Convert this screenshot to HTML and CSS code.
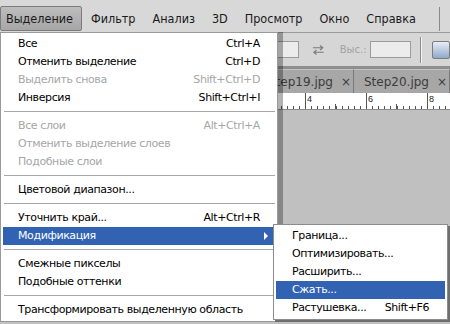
FILE: index.html
```html
<!DOCTYPE html>
<html lang="ru">
<head>
    <meta charset="UTF-8">
    <title>Выделение — Модификация</title>
    <link rel="stylesheet" href="styles.css">
</head>
<body>
    <div class="app">
        <div class="menubar">
            <span class="mb-item active">Выделение</span>
            <span class="mb-item">Фильтр</span>
            <span class="mb-item">Анализ</span>
            <span class="mb-item">3D</span>
            <span class="mb-item">Просмотр</span>
            <span class="mb-item">Окно</span>
            <span class="mb-item">Справка</span>
            <span class="mb-sep"></span>
        </div>

        <div class="options">
            <span class="field field-w"></span>
            <svg class="swap" width="14" height="12" viewBox="0 0 14 12">
                <path d="M1 3.5h11M9 1l3 2.5L9 6" fill="none" stroke="#7a7a7a" stroke-width="1.2"/>
                <path d="M13 8.5H2M5 6L2 8.5 5 11" fill="none" stroke="#7a7a7a" stroke-width="1.2"/>
            </svg>
            <span class="opt-label">Выс.:</span>
            <span class="field field-h"></span>
            <span class="vsep"></span>
            <span class="tool-btn"></span>
        </div>

        <div class="tabs">
            <div class="tab"><span class="tab-name">Step19.jpg</span><span class="tab-x">×</span></div>
            <div class="tab"><span class="tab-name">Step20.jpg</span><span class="tab-x">×</span></div>
        </div>

        <div class="ruler">
            <span class="num n4">4</span>
            <span class="num n6">6</span>
            <span class="num n8">8</span>
        </div>

        <div class="canvas"></div>

        <!-- выпадающее меню "Выделение" -->
        <div class="menu">
            <div class="item"><span>Все</span><span class="key">Ctrl+A</span></div>
            <div class="item"><span>Отменить выделение</span><span class="key">Ctrl+D</span></div>
            <div class="item off"><span>Выделить снова</span><span class="key">Shift+Ctrl+D</span></div>
            <div class="item"><span>Инверсия</span><span class="key">Shift+Ctrl+I</span></div>
            <div class="sep"></div>
            <div class="item off"><span>Все слои</span><span class="key">Alt+Ctrl+A</span></div>
            <div class="item off"><span>Отменить выделение слоев</span></div>
            <div class="item off"><span>Подобные слои</span></div>
            <div class="sep"></div>
            <div class="item"><span>Цветовой диапазон...</span></div>
            <div class="sep"></div>
            <div class="item"><span>Уточнить край...</span><span class="key">Alt+Ctrl+R</span></div>
            <div class="item hover"><span>Модификация</span>
                <svg class="arrow" width="5" height="8" viewBox="0 0 5 8"><path d="M0 0l4 4-4 4z" fill="#fff"/></svg>
            </div>
            <div class="sep"></div>
            <div class="item"><span>Смежные пикселы</span></div>
            <div class="item"><span>Подобные оттенки</span></div>
            <div class="sep"></div>
            <div class="item"><span>Трансформировать выделенную область</span></div>
        </div>

        <!-- подменю "Модификация" -->
        <div class="submenu">
            <div class="item"><span>Граница...</span></div>
            <div class="item"><span>Оптимизировать...</span></div>
            <div class="item"><span>Расширить...</span></div>
            <div class="item hover"><span>Сжать...</span></div>
            <div class="item"><span>Растушевка...</span><span class="key">Shift+F6</span></div>
        </div>
    </div>
</body>
</html>
```

FILE: styles.css
```css
body {
    margin: 0;
    font-family: 'DejaVu Sans', Verdana, sans-serif;
    background: #c0c0c0;
}

.app {
    position: relative;
    width: 450px;
    height: 324px;
    overflow: hidden;
    display: flex;
    flex-direction: column;
    background: #c0c0c0;
}

/* menubar */
.menubar {
    height: 32px;
    flex-shrink: 0;
    display: flex;
    align-items: flex-end;
    padding-bottom: 1px;
    box-sizing: border-box;
    background: #d8d8d8;
    font-family: 'DejaVu Sans Condensed', 'DejaVu Sans', sans-serif;
    font-stretch: condensed;
    font-size: 12.5px;
    color: #1a1a1a;
}

.mb-item {
    height: 23px;
    line-height: 23px;
    padding: 0 7px;
    margin-right: 1px;
    border: 1px solid transparent;
}

.mb-item.active {
    padding: 0 8px 0 5px;
    background: linear-gradient(#bdbdbd, #a6a6a6);
    border-color: #7c7c7c;
    border-radius: 2px;
}

.mb-sep {
    width: 1px;
    height: 24px;
    margin-left: 14px;
    background: #8a8a8a;
}

/* options bar */
.options {
    height: 34px;
    flex-shrink: 0;
    box-sizing: border-box;
    border-top: 1px solid #9a9a9a;
    display: flex;
    align-items: center;
    padding-left: 256px;
    background: #d6d6d6;
}

.field {
    height: 15px;
    border: 1px solid #9c9c9c;
    background: #ececec;
}

.field-w { width: 46px; }
.field-h { width: 44px; }

.swap {
    margin: 0 15px 0 13px;
}

.opt-label {
    font-size: 10px;
    color: #a2a2a2;
    margin-right: 3px;
}

.vsep {
    width: 1px;
    height: 26px;
    margin: 0 11px 0 9px;
    background: #8c8c8c;
    box-shadow: 1px 0 0 #f2f2f2;
}

.tool-btn {
    width: 18px;
    height: 16px;
    border: 1px solid #7d7d7d;
    border-radius: 2px;
    background: linear-gradient(#e8eef6, #8fa9cc);
}

/* document tabs */
.tabs {
    height: 27px;
    flex-shrink: 0;
    display: flex;
    box-sizing: border-box;
    padding-top: 3px;
    padding-left: 258px;
    background: #8e8e8e;
}

.tab {
    width: 88px;
    padding-left: 10px;
    display: flex;
    align-items: center;
    background: #a7a7a7;
    border-top: 1px solid #c4c4c4;
    border-right: 1px solid #7a7a7a;
    font-size: 12px;
    color: #3c3c3c;
}

.tab-x {
    margin-left: 8px;
    font-size: 12px;
}

/* ruler */
.ruler {
    position: relative;
    height: 16px;
    flex-shrink: 0;
    background-color: #fff;
    background-image:
        repeating-linear-gradient(to right, #555 0 1px, transparent 1px 61px),
        repeating-linear-gradient(to right, #555 0 1px, transparent 1px 30.5px),
        repeating-linear-gradient(to right, #555 0 1px, transparent 1px 6.1px);
    background-size: 100% 100%, 100% 5px, 100% 3px;
    background-position: 0 0, 0 100%, 0 100%;
    background-repeat: no-repeat;
    border-bottom: 1px solid #8a8a8a;
}

.num {
    position: absolute;
    top: 1px;
    font-size: 9px;
    font-family: 'Liberation Sans', Arial, sans-serif;
    color: #222;
}

.n4 { left: 307px; }
.n6 { left: 368px; }
.n8 { left: 429px; }

.canvas {
    flex: 1;
    background: #c0c0c0;
}

/* drop-down menus */
.menu, .submenu {
    position: absolute;
    background: #fff;
    border: 1px solid #9a9a9a;
    padding: 2px;
    font-size: 11px;
    letter-spacing: -0.4px;
    color: #000;
}

.menu {
    left: 0;
    top: 32px;
    width: 272px;
    box-shadow: 5px 0 0 rgba(0, 0, 0, 0.3);
}

.submenu {
    left: 273px;
    top: 224px;
    width: 169px;
    border-color: #8c8c8c;
    box-shadow: 2px 2px 0 #6e6e6e;
}

.item {
    height: 18px;
    line-height: 18px;
    display: flex;
    padding: 0 15px 0 15px;
}

.submenu .item {
    padding: 0 16px 0 16px;
}

.key {
    margin-left: auto;
}

.item.off {
    color: #a6a6a6;
}

.item.hover {
    background: #3163b2;
    color: #fff;
}

.arrow {
    margin: 5px -9px 0 auto;
}

.sep {
    height: 10px;
    position: relative;
}

.sep::after {
    content: "";
    position: absolute;
    left: 1px;
    right: 0;
    top: 4px;
    height: 1px;
    background: #a8a8a8;
}
```
